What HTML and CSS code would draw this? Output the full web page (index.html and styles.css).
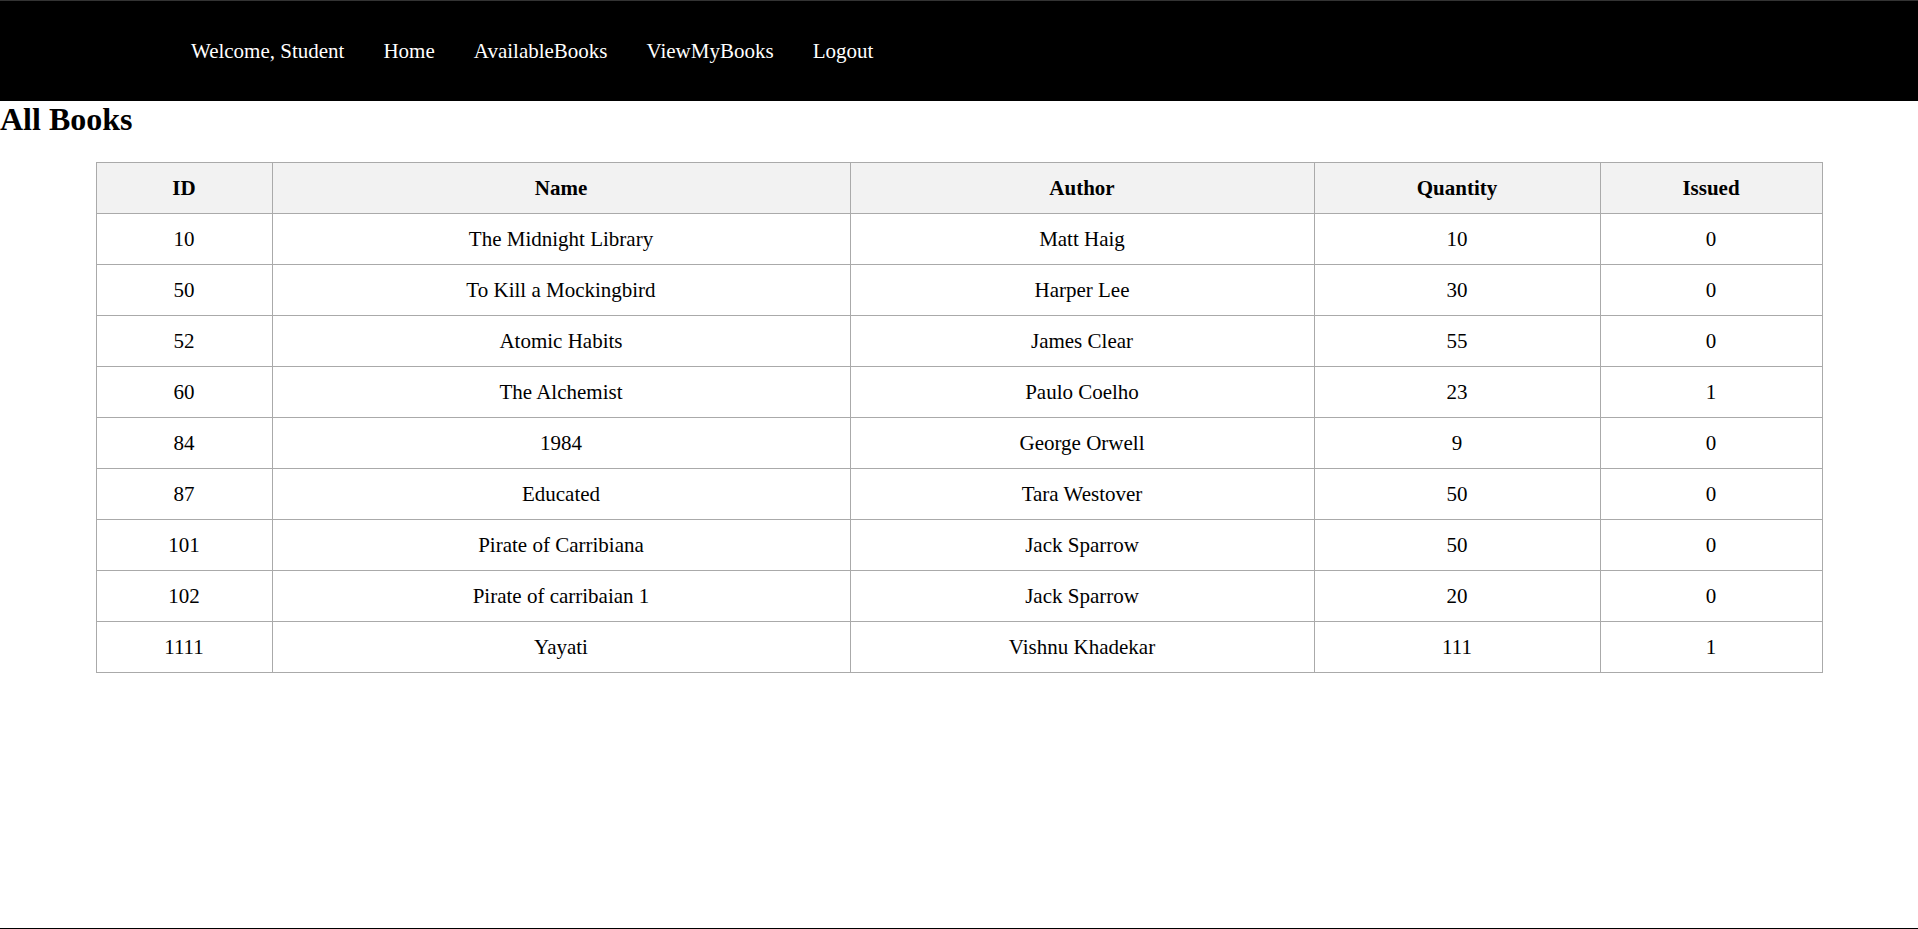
FILE: index.html
```html
<!DOCTYPE html>
<html lang="en">
<head>
<meta charset="utf-8">
<title>All Books</title>
<link rel="stylesheet" href="styles.css">
</head>
<body>
<nav class="topnav">
  <span class="nav-item">Welcome, Student</span>
  <a class="nav-item" href="#">Home</a>
  <a class="nav-item" href="#">AvailableBooks</a>
  <a class="nav-item" href="#">ViewMyBooks</a>
  <a class="nav-item" href="#">Logout</a>
</nav>
<h1 class="page-title">All Books</h1>
<table class="books">
  <colgroup>
    <col class="col-id">
    <col class="col-name">
    <col class="col-author">
    <col class="col-qty">
    <col class="col-issued">
  </colgroup>
  <thead>
    <tr><th>ID</th><th>Name</th><th>Author</th><th>Quantity</th><th>Issued</th></tr>
  </thead>
  <tbody>
    <tr><td>10</td><td>The Midnight Library</td><td>Matt Haig</td><td>10</td><td>0</td></tr>
    <tr><td>50</td><td>To Kill a Mockingbird</td><td>Harper Lee</td><td>30</td><td>0</td></tr>
    <tr><td>52</td><td>Atomic Habits</td><td>James Clear</td><td>55</td><td>0</td></tr>
    <tr><td>60</td><td>The Alchemist</td><td>Paulo Coelho</td><td>23</td><td>1</td></tr>
    <tr><td>84</td><td>1984</td><td>George Orwell</td><td>9</td><td>0</td></tr>
    <tr><td>87</td><td>Educated</td><td>Tara Westover</td><td>50</td><td>0</td></tr>
    <tr><td>101</td><td>Pirate of Carribiana</td><td>Jack Sparrow</td><td>50</td><td>0</td></tr>
    <tr><td>102</td><td>Pirate of carribaian 1</td><td>Jack Sparrow</td><td>20</td><td>0</td></tr>
    <tr><td>1111</td><td>Yayati</td><td>Vishnu Khadekar</td><td>111</td><td>1</td></tr>
  </tbody>
</table>
</body>
</html>
```
FILE: styles.css
```css
html, body {
  margin: 0;
  padding: 0;
}
body {
  font-family: "Liberation Serif", "Times New Roman", serif;
  color: #000;
  background: #fff;
  min-height: 100vh;
  box-sizing: border-box;
  border-top: 1px solid #333;
  border-bottom: 1px solid #000;
}
.topnav {
  background: #000;
  height: 100px;
  display: flex;
  align-items: center;
  gap: 39px;
  padding-left: 191px;
}
.nav-item {
  color: #fff;
  font-size: 21px;
  line-height: 24px;
  text-decoration: none;
}
.page-title {
  margin: 0;
  font-size: 32px;
  font-weight: bold;
}
.books {
  width: 90%;
  margin: 24px auto 0;
  border-collapse: collapse;
  table-layout: fixed;
  font-size: 21px;
  line-height: 24px;
}
.col-id { width: 176px; }
.col-name { width: 578px; }
.col-author { width: 464px; }
.col-qty { width: 286px; }
.col-issued { width: 222px; }
.books th,
.books td {
  border: 1px solid #aaa;
  padding: 13px 8px 13px;
  text-align: center;
}
.books th {
  background: #f2f2f2;
  font-weight: bold;
}
```
